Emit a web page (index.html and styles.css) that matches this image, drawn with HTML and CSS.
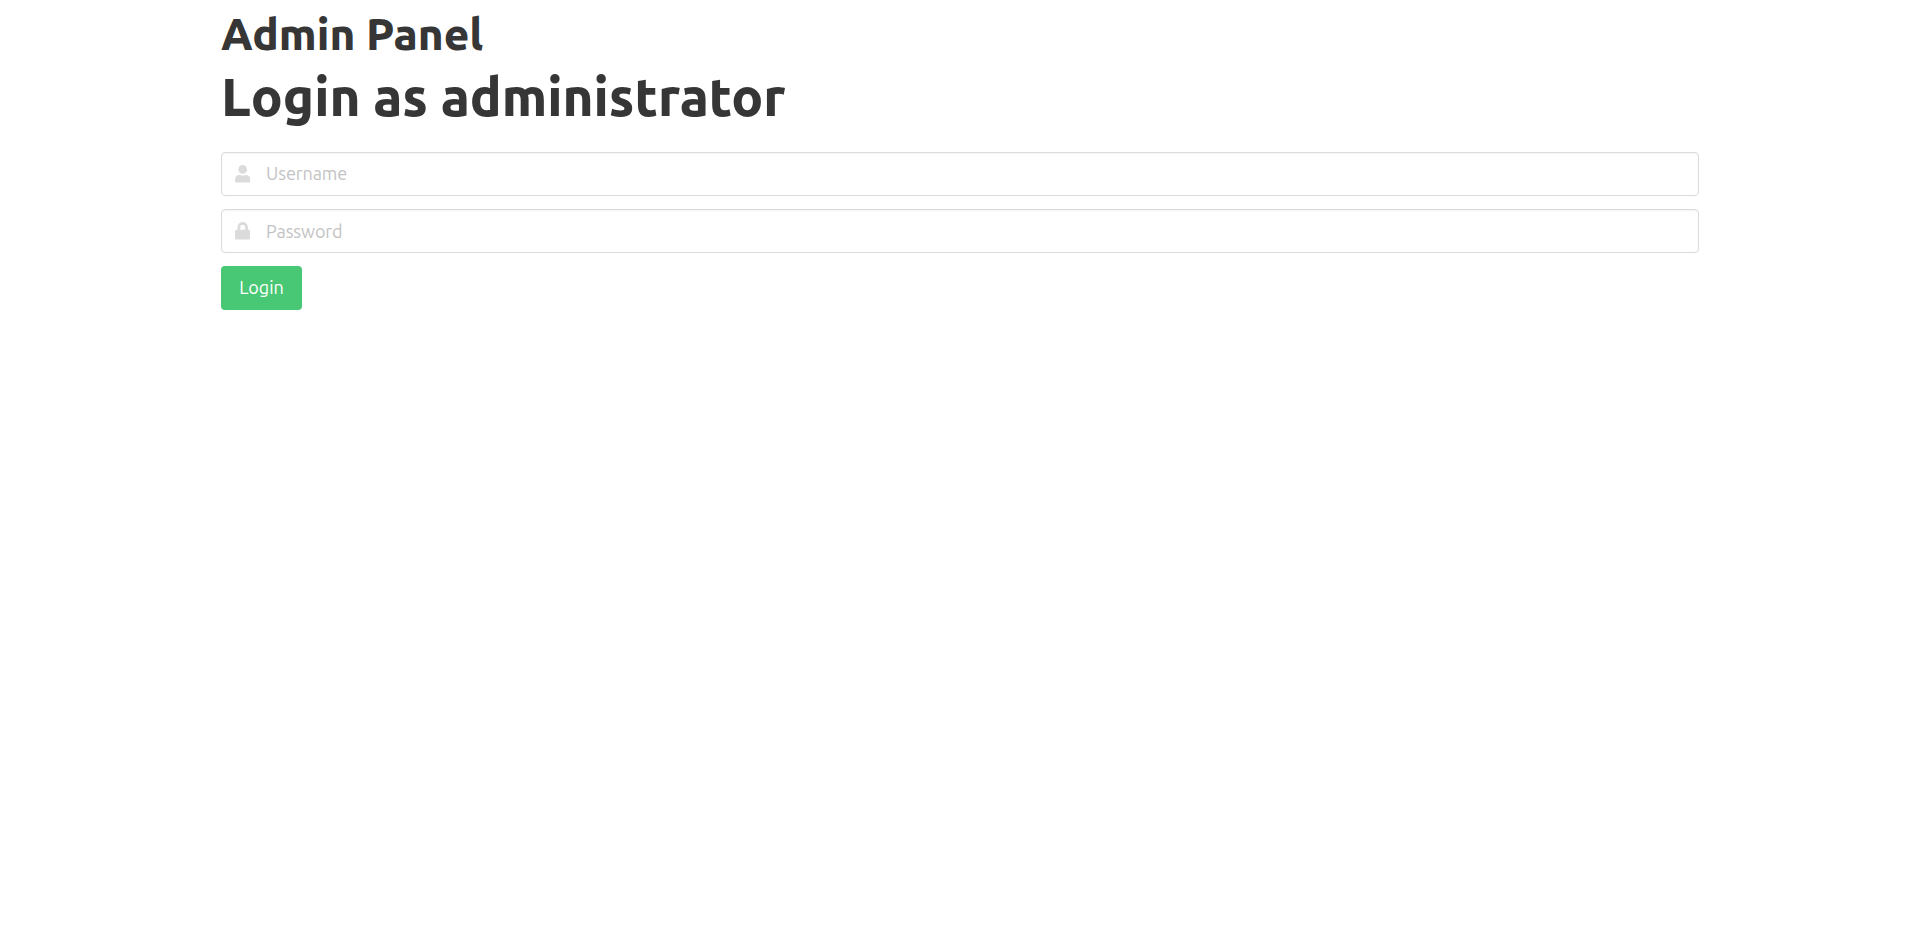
FILE: index.html
```html
<!DOCTYPE html>
<html lang="en">
<head>
<meta charset="utf-8">
<title>Admin Panel</title>
<link rel="stylesheet" href="styles.css">
</head>
<body>
<main class="container">
  <h1 class="brand">Admin Panel</h1>
  <h2 class="title">Login as administrator</h2>
  <form class="form">
    <label class="field">
      <svg class="icon" viewBox="0 0 448 512"><path d="M224 256c70.700 0 128-57.300 128-128S294.700 0 224 0 96 57.300 96 128s57.300 128 128 128zm89.600 32h-16.700c-22.200 10.200-46.900 16-72.900 16s-50.600-5.800-72.900-16h-16.700C60.200 288 0 348.200 0 422.400V464c0 26.500 21.500 48 48 48h352c26.500 0 48-21.500 48-48v-41.600c0-74.200-60.200-134.400-134.400-134.400z"/></svg>
      <input class="input" type="text" placeholder="Username">
    </label>
    <label class="field">
      <svg class="icon" viewBox="0 0 448 512"><path d="M400 224h-24v-72C376 68.200 307.800 0 224 0S72 68.200 72 152v72H48c-26.500 0-48 21.500-48 48v192c0 26.500 21.500 48 48 48h352c26.500 0 48-21.500 48-48V272c0-26.500-21.500-48-48-48zm-104 0H152v-72c0-39.700 32.300-72 72-72s72 32.300 72 72v72z"/></svg>
      <input class="input input-password" type="password" placeholder="Password">
    </label>
    <button class="button" type="button">Login</button>
  </form>
</main>
</body>
</html>
```
FILE: styles.css
```css
* { box-sizing: border-box; }
body {
  margin: 0;
  background: #fff;
  color: #363636;
  font-family: Ubuntu, "Noto Sans", sans-serif;
}
.container { width: 1478px; margin: 0 auto; padding-top: 8px; }
.brand, .title { margin: 0; font-weight: 800; white-space: nowrap; }
.brand { font-size: 44px; line-height: 51px; }
.title { font-size: 52.8px; line-height: 63px; margin-top: 6px; }
.form { display: flex; flex-direction: column; align-items: flex-start; gap: 13px; margin-top: 24px; }
.field {
  display: flex;
  align-items: center;
  width: 100%;
  height: 44px;
  padding-left: 13px;
  border: 1px solid #dbdbdb;
  border-radius: 4px;
  box-shadow: inset 0 1px 2px rgba(10, 10, 10, .05);
}
.icon { width: 15.4px; height: 17.6px; fill: #dbdbdb; }
.input {
  flex: 1;
  margin-left: 15.6px;
  padding: 0 0 2px;
  border: 0;
  outline: 0;
  background: transparent;
  font: 18px Ubuntu, "Noto Sans", sans-serif;
  letter-spacing: -.1px;
}
.input-password { padding: 0; }
.input::placeholder { color: #c3c3c3; opacity: 1; }
.button {
  height: 44px;
  width: 81px;
  padding: 0 0 2px;
  border: 0;
  border-radius: 4px;
  background: #48c774;
  color: #fff;
  font: 18px Ubuntu, "Noto Sans", sans-serif;
}
```
